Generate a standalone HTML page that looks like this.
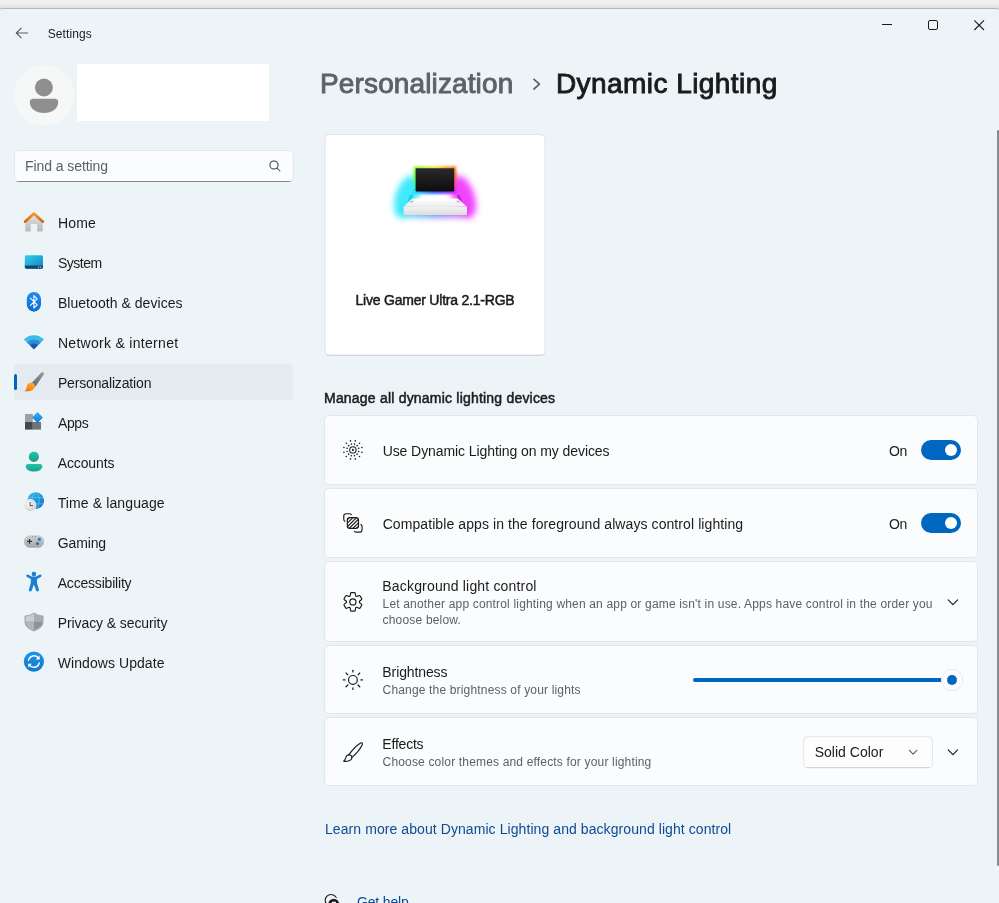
<!DOCTYPE html>
<html><head><meta charset="utf-8">
<style>
html,body{margin:0;padding:0;}
body{width:999px;height:903px;overflow:hidden;position:relative;background:linear-gradient(to bottom,#f1f1f0 0px,#eeeeee 4px,#e4e4e4 7px,#dadada 8.5px,#ecf4f8 9px);font-family:"Liberation Sans",sans-serif;color:#1b1b1b;}
#win{position:absolute;left:-4px;top:8px;width:1007px;height:895px;background:#ecf4f8;border-top:1px solid #b4b7ba;border-radius:7px 7px 0 0;box-sizing:border-box;}
.t{position:absolute;white-space:nowrap;line-height:1;}
.abs{position:absolute;}
svg{position:absolute;overflow:visible;}
.row{position:absolute;left:325px;width:652px;background:#fafcfd;border:1px solid #e2e7eb;border-radius:4px;box-sizing:border-box;}
.tog{position:absolute;left:921px;width:40px;height:20px;border-radius:10px;background:#0067c0;}
.tog i{position:absolute;left:24px;top:4px;width:12px;height:12px;border-radius:50%;background:#fff;}
</style></head><body>
<div id="win"></div>

<!-- avatar -->
<div class="abs" style="left:77px;top:64px;width:192px;height:57px;background:#fff;"></div>

<!-- search -->
<svg width="999" height="903" viewBox="0 0 999 903" style="left:0;top:0;"><defs><clipPath id="cpS"><rect x="10" y="180.9" width="290" height="3"/></clipPath></defs><rect x="14.5" y="150.5" width="278.7" height="31" rx="4" fill="#fafcfd" stroke="#e3e7eb"/><rect x="14.5" y="150.5" width="278.7" height="31" rx="4" fill="none" stroke="#84888d" clip-path="url(#cpS)"/></svg>

<!-- nav selection -->
<div class="abs" style="left:14px;top:364px;width:279px;height:36px;border-radius:4px;background:#e3eaf0;"></div>
<div class="abs" style="left:14px;top:374px;width:3px;height:16px;border-radius:2px;background:#0067c0;"></div>

<!-- device card -->
<svg width="999" height="903" viewBox="0 0 999 903" style="left:0;top:0;"><defs><clipPath id="cpC"><rect x="320" y="354.5" width="230" height="3"/></clipPath></defs><rect x="325" y="134.6" width="220" height="220.6" rx="4" fill="#ffffff" stroke="#dfe3e7"/><rect x="325" y="134.6" width="220" height="220.6" rx="4" fill="none" stroke="#c9cdd2" clip-path="url(#cpC)"/></svg>

<!-- rows -->
<svg width="999" height="903" viewBox="0 0 999 903" style="left:0;top:0;"><rect x="324.5" y="415.5" width="653" height="69.0" rx="4" fill="#fafcfd" stroke="#e1e6ea" stroke-width="1"/><rect x="324.5" y="488.5" width="653" height="69.0" rx="4" fill="#fafcfd" stroke="#e1e6ea" stroke-width="1"/><rect x="324.5" y="561.5" width="653" height="80.0" rx="4" fill="#fafcfd" stroke="#e1e6ea" stroke-width="1"/><rect x="324.5" y="645.5" width="653" height="68.0" rx="4" fill="#fafcfd" stroke="#e1e6ea" stroke-width="1"/><rect x="324.5" y="717.5" width="653" height="68.0" rx="4" fill="#fafcfd" stroke="#e1e6ea" stroke-width="1"/></svg>

<!-- toggles -->
<div class="tog" style="top:440px;"><i></i></div>
<div class="tog" style="top:513px;"><i></i></div>

<!-- slider -->
<div class="abs" style="left:693px;top:678px;width:253px;height:4px;border-radius:2px;background:#0067c0;"></div>
<div class="abs" style="left:942px;top:670px;width:20px;height:20px;border-radius:50%;background:#fff;box-shadow:0 0 0 1px #eaedf0;"></div>
<div class="abs" style="left:946.7px;top:674.7px;width:10.6px;height:10.6px;border-radius:50%;background:#0067c0;"></div>

<!-- dropdown -->
<svg width="999" height="903" viewBox="0 0 999 903" style="left:0;top:0;"><rect x="803.7" y="736.7" width="128.7" height="31.1" rx="3.5" fill="#fdfdfe" stroke="#e3e7ea"/><path d="M806.5 767.6H929.5" stroke="#cdd2d6" stroke-width="1"/></svg>

<div id="txt" style="position:absolute;left:0;top:0;width:999px;height:903px;will-change:transform;">
<span class="t" id="tset" style="left:47.72px;top:27.64px;font-size:12px;letter-spacing:0.099px;color:#1b1b1b;">Settings</span>
<span class="t" id="tfind" style="left:25.06px;top:158.95px;font-size:14px;letter-spacing:-0.076px;color:#5d6166;">Find a setting</span>
<span class="t" id="n1" style="left:57.90px;top:216.45px;font-size:14px;letter-spacing:0.197px;color:#1b1b1b;">Home</span>
<span class="t" id="n2" style="left:57.90px;top:256.45px;font-size:14px;letter-spacing:-0.498px;color:#1b1b1b;">System</span>
<span class="t" id="n3" style="left:57.90px;top:296.45px;font-size:14px;letter-spacing:0.051px;color:#1b1b1b;">Bluetooth &amp; devices</span>
<span class="t" id="n4" style="left:57.90px;top:336.45px;font-size:14px;letter-spacing:0.297px;color:#1b1b1b;">Network &amp; internet</span>
<span class="t" id="n5" style="left:57.90px;top:376.45px;font-size:14px;letter-spacing:-0.156px;color:#1b1b1b;">Personalization</span>
<span class="t" id="n6" style="left:57.90px;top:416.45px;font-size:14px;letter-spacing:-0.334px;color:#1b1b1b;">Apps</span>
<span class="t" id="n7" style="left:57.70px;top:456.45px;font-size:14px;letter-spacing:-0.112px;color:#1b1b1b;">Accounts</span>
<span class="t" id="n8" style="left:57.70px;top:496.45px;font-size:14px;letter-spacing:0.115px;color:#1b1b1b;">Time &amp; language</span>
<span class="t" id="n9" style="left:57.70px;top:536.45px;font-size:14px;letter-spacing:-0.110px;color:#1b1b1b;">Gaming</span>
<span class="t" id="n10" style="left:57.70px;top:576.45px;font-size:14px;letter-spacing:-0.192px;color:#1b1b1b;">Accessibility</span>
<span class="t" id="n11" style="left:57.70px;top:616.45px;font-size:14px;letter-spacing:-0.089px;color:#1b1b1b;">Privacy &amp; security</span>
<span class="t" id="n12" style="left:57.70px;top:656.45px;font-size:14px;letter-spacing:0.074px;color:#1b1b1b;">Windows Update</span>
<span class="t" id="h1" style="left:320.07px;top:69.89px;font-size:28px;letter-spacing:0.123px;color:#5d6166;-webkit-text-stroke:0.9px #5d6166;">Personalization</span>
<span class="t" id="h2" style="left:555.95px;top:69.89px;font-size:28px;letter-spacing:0.439px;color:#1b1b1b;-webkit-text-stroke:0.9px #1b1b1b;">Dynamic Lighting</span>
<span class="t" id="dev" style="left:355.52px;top:293.15px;font-size:14px;letter-spacing:-0.218px;color:#1b1b1b;-webkit-text-stroke:0.5px #1b1b1b;">Live Gamer Ultra 2.1-RGB</span>
<span class="t" id="man" style="left:324.02px;top:391.25px;font-size:14px;letter-spacing:0.205px;color:#1b1b1b;-webkit-text-stroke:0.5px #1b1b1b;">Manage all dynamic lighting devices</span>
<span class="t" id="r1" style="left:382.65px;top:443.85px;font-size:14px;letter-spacing:-0.080px;color:#1b1b1b;">Use Dynamic Lighting on my devices</span>
<span class="t" id="r2" style="left:382.65px;top:516.85px;font-size:14px;letter-spacing:0.086px;color:#1b1b1b;">Compatible apps in the foreground always control lighting</span>
<span class="t" id="r3" style="left:382.35px;top:579.15px;font-size:14px;letter-spacing:0.171px;color:#1b1b1b;">Background light control</span>
<span class="t" id="r3a" style="left:382.57px;top:598.34px;font-size:12px;letter-spacing:0.173px;color:#5d6166;">Let another app control lighting when an app or game isn't in use. Apps have control in the order you</span>
<span class="t" id="r3b" style="left:382.57px;top:614.24px;font-size:12px;letter-spacing:0.184px;color:#5d6166;">choose below.</span>
<span class="t" id="r4" style="left:382.35px;top:665.45px;font-size:14px;letter-spacing:-0.109px;color:#1b1b1b;">Brightness</span>
<span class="t" id="r4a" style="left:382.57px;top:684.04px;font-size:12px;letter-spacing:0.166px;color:#5d6166;">Change the brightness of your lights</span>
<span class="t" id="r5" style="left:382.35px;top:737.05px;font-size:14px;letter-spacing:-0.217px;color:#1b1b1b;">Effects</span>
<span class="t" id="r5a" style="left:382.57px;top:756.04px;font-size:12px;letter-spacing:0.169px;color:#5d6166;">Choose color themes and effects for your lighting</span>
<span class="t" id="on1" style="left:888.98px;top:443.85px;font-size:14px;letter-spacing:-0.311px;color:#1b1b1b;">On</span>
<span class="t" id="on2" style="left:888.98px;top:516.85px;font-size:14px;letter-spacing:-0.311px;color:#1b1b1b;">On</span>
<span class="t" id="solid" style="left:814.66px;top:745.15px;font-size:14px;letter-spacing:0.018px;color:#1b1b1b;">Solid Color</span>
<span class="t" id="learn" style="left:325.00px;top:821.95px;font-size:14px;letter-spacing:0.076px;color:#0f4a94;">Learn more about Dynamic Lighting and background light control</span>
<span class="t" id="help" style="left:357.05px;top:895.15px;font-size:14px;letter-spacing:-0.181px;color:#0f4a94;">Get help</span>
</div>
<svg width="999" height="903" viewBox="0 0 999 903" style="left:0;top:0;" fill="none">
<defs>
<linearGradient id="gHomeRoof" x1="0" y1="0" x2="0" y2="1"><stop offset="0" stop-color="#f59a23"/><stop offset="1" stop-color="#cf6410"/></linearGradient>
<linearGradient id="gHomeBody" x1="0" y1="0" x2="0" y2="1"><stop offset="0" stop-color="#e4e4e4"/><stop offset="1" stop-color="#b9b9b9"/></linearGradient>
<linearGradient id="gSys" x1="0" y1="0" x2="1" y2="1"><stop offset="0" stop-color="#2fd0ea"/><stop offset="1" stop-color="#1880c4"/></linearGradient>
<linearGradient id="gBt" x1="0" y1="0" x2="0" y2="1"><stop offset="0" stop-color="#1b8cf0"/><stop offset="1" stop-color="#0b6fd0"/></linearGradient>
<linearGradient id="gHandle" x1="1" y1="0" x2="0" y2="1"><stop offset="0" stop-color="#9a9da0"/><stop offset="1" stop-color="#5e6266"/></linearGradient>
<linearGradient id="gTip" x1="0.7" y1="0" x2="0.2" y2="1"><stop offset="0" stop-color="#ffb02e"/><stop offset="1" stop-color="#ee6f0e"/></linearGradient>
<linearGradient id="gDia" x1="0" y1="0" x2="0" y2="1"><stop offset="0" stop-color="#35b0f4"/><stop offset="1" stop-color="#1478d4"/></linearGradient>
<linearGradient id="gAcc" x1="0" y1="0" x2="0" y2="1"><stop offset="0" stop-color="#22c4a8"/><stop offset="1" stop-color="#15a08c"/></linearGradient>
<linearGradient id="gGlobe" x1="0" y1="0" x2="1" y2="1"><stop offset="0" stop-color="#2fc4e6"/><stop offset="1" stop-color="#1468c8"/></linearGradient>
<radialGradient id="gClock" cx="0.4" cy="0.35" r="0.7"><stop offset="0" stop-color="#fafafa"/><stop offset="1" stop-color="#cfcfcf"/></radialGradient>
<linearGradient id="gPad" x1="0" y1="0" x2="0" y2="1"><stop offset="0" stop-color="#cdcfd0"/><stop offset="1" stop-color="#a4a6a8"/></linearGradient>
<linearGradient id="gUpd" x1="0" y1="0" x2="0" y2="1"><stop offset="0" stop-color="#1c96e8"/><stop offset="1" stop-color="#0f78cc"/></linearGradient>
<radialGradient id="gCy" cx="0.5" cy="0.5" r="0.5"><stop offset="0" stop-color="#00f0ff" stop-opacity="1"/><stop offset="0.45" stop-color="#20e8ff" stop-opacity="0.85"/><stop offset="1" stop-color="#60e8ff" stop-opacity="0"/></radialGradient>
<radialGradient id="gMg" cx="0.5" cy="0.5" r="0.5"><stop offset="0" stop-color="#f000ff" stop-opacity="1"/><stop offset="0.45" stop-color="#f020ff" stop-opacity="0.85"/><stop offset="1" stop-color="#f860ff" stop-opacity="0"/></radialGradient>
<linearGradient id="gRain" x1="0" y1="0" x2="1" y2="0"><stop offset="0" stop-color="#7dff30"/><stop offset="0.5" stop-color="#ffe030"/><stop offset="1" stop-color="#ff6a20"/></linearGradient>
<linearGradient id="gRainB" x1="0" y1="0" x2="1" y2="0"><stop offset="0" stop-color="#20d8ff"/><stop offset="0.5" stop-color="#3060ff"/><stop offset="1" stop-color="#e020ff"/></linearGradient>
<linearGradient id="gRainL" x1="0" y1="0" x2="0" y2="1"><stop offset="0" stop-color="#7dff30"/><stop offset="1" stop-color="#20e0ff"/></linearGradient>
<linearGradient id="gRainR" x1="0" y1="0" x2="0" y2="1"><stop offset="0" stop-color="#ff6a20"/><stop offset="1" stop-color="#f020ff"/></linearGradient>
<linearGradient id="gScreen" x1="0" y1="0" x2="0" y2="1"><stop offset="0" stop-color="#2a2a2a"/><stop offset="1" stop-color="#0c0c0c"/></linearGradient>
<linearGradient id="gBaseTop" x1="0" y1="0" x2="0" y2="1"><stop offset="0" stop-color="#ffffff"/><stop offset="1" stop-color="#ececec"/></linearGradient>
<linearGradient id="gBaseFront" x1="0" y1="0" x2="0" y2="1"><stop offset="0" stop-color="#f2f2f2"/><stop offset="1" stop-color="#dcdcdc"/></linearGradient>
<filter id="blur2" x="-50%" y="-50%" width="200%" height="200%"><feGaussianBlur stdDeviation="1.2"/></filter>
<filter id="blur4" x="-50%" y="-50%" width="200%" height="200%"><feGaussianBlur stdDeviation="3"/></filter>
<clipPath id="clipGlobe"><circle cx="35.7" cy="500.6" r="8.4"/></clipPath>
<clipPath id="clipHatch"><rect x="347.3" y="517.6" width="11.2" height="10.8" rx="2.6"/></clipPath>
</defs>
<g stroke="#5a5f64" stroke-width="1.1" stroke-linecap="round" stroke-linejoin="round"><path d="M16.3 33H27.6M21.2 28.1L16.3 33L21.2 37.9"/></g>
<g stroke="#1b1b1b" stroke-width="1"><path d="M882 24.5H892"/><rect x="928.5" y="20.5" width="9" height="9" rx="1.5"/><path d="M974.3 20.3L984 30M984 20.3L974.3 30" stroke-width="1.1"/></g>
<circle cx="44.1" cy="95.3" r="30.2" fill="#f6f7f7"/>
<circle cx="43.9" cy="87.5" r="9" fill="#8f8f8f"/>
<path d="M33.3 98.8H54.7A3.5 3.5 0 0 1 58.2 102.3C58.2 108.5 52 113.1 44 113.1C36 113.1 29.8 108.5 29.8 102.3A3.5 3.5 0 0 1 33.3 98.8Z" fill="#8f8f8f"/>
<g stroke="#3a3d40" stroke-width="1.05" stroke-linecap="round"><circle cx="274" cy="165" r="4.1"/><path d="M277 168L280 171"/></g>
<path d="M25.2 220.5L33.9 213.6L42.8 220.5V230A1.5 1.5 0 0 1 41.3 231.5H37.2V224H30.8V231.5H26.7A1.5 1.5 0 0 1 25.2 230Z" fill="url(#gHomeBody)"/>
<path d="M25 221.7L33.9 213.5L42.9 221.7" stroke="url(#gHomeRoof)" stroke-width="2.6" stroke-linecap="round" stroke-linejoin="round"/>
<rect x="24.8" y="255.3" width="18.2" height="13.4" rx="1.6" fill="url(#gSys)"/>
<path d="M24.8 265.6H43V267.1A1.6 1.6 0 0 1 41.4 268.7H26.4A1.6 1.6 0 0 1 24.8 267.1Z" fill="#0d4878"/>
<circle cx="38.6" cy="267.2" r="0.6" fill="#cfe8f8"/><circle cx="40.6" cy="267.2" r="0.6" fill="#cfe8f8"/>
<rect x="26.8" y="291.9" width="14.2" height="19.8" rx="7.1" fill="url(#gBt)"/>
<path d="M30.4 298.2L37.2 304.8L33.9 308V295.6L37.2 298.8L30.4 305.4" stroke="#fff" stroke-width="1.1" stroke-linejoin="round" stroke-linecap="round"/>
<path d="M33.9 349.2L23.83 339.47A14.0 14.0 0 0 1 43.97 339.47Z" fill="#3cbcea"/>
<path d="M33.9 349.2L26.99 342.53A9.6 9.6 0 0 1 40.81 342.53Z" fill="#2b8ed2"/>
<path d="M33.9 349.2L29.87 345.31A5.6 5.6 0 0 1 37.93 345.31Z" fill="#1b58a6"/>
<path d="M41.4 372.5C42.8 371.6 44.6 373 43.8 374.6L35.4 386.8L31.2 383.6Z" fill="url(#gHandle)"/>
<path d="M30.6 382.6C32.6 382 35.4 384.4 34.9 387C34.2 390.2 29.5 391.8 24.2 391.2C26.8 390 26.4 388 27 385.8C27.5 384 28.8 383 30.6 382.6Z" fill="url(#gTip)"/>
<rect x="25" y="414" width="7.8" height="8" fill="#9c9fa3"/><rect x="25" y="422" width="7.8" height="7.6" fill="#44484d"/><rect x="32.8" y="422" width="8.2" height="7.6" fill="#6f7377"/>
<path d="M37.5 412L43 417.5L37.5 423L32 417.5Z" fill="url(#gDia)"/>
<circle cx="33.9" cy="456.8" r="5.1" fill="url(#gAcc)"/>
<path d="M28 464H40.1A2.2 2.2 0 0 1 42.3 466.2C42.3 469.4 38.6 471.6 34 471.6C29.4 471.6 25.8 469.4 25.8 466.2A2.2 2.2 0 0 1 28 464Z" fill="url(#gAcc)"/>
<circle cx="35.7" cy="500.6" r="8.4" fill="url(#gGlobe)"/>
<g clip-path="url(#clipGlobe)" stroke="#6fd0f0" stroke-width="0.8" opacity="0.75"><ellipse cx="35.7" cy="500.6" rx="3.6" ry="8.4"/><path d="M27 497.6H45M27 503.8H45"/></g>
<circle cx="30.1" cy="505.4" r="6.3" fill="#eef5f9"/><circle cx="30.1" cy="505.4" r="5.8" fill="url(#gClock)"/>
<path d="M30.1 502.4V505.6H32.6" stroke="#3a3a3a" stroke-width="0.9" stroke-linecap="round" stroke-linejoin="round"/>
<rect x="23.9" y="535.2" width="20.2" height="12.6" rx="6.3" fill="url(#gPad)"/>
<path d="M27.1 541.4H31.9M29.5 539V543.8" stroke="#2e2e2e" stroke-width="1.1"/>
<circle cx="39.4" cy="539.2" r="1.5" fill="#1a74cc"/><circle cx="37.5" cy="543.5" r="1.6" fill="#1a74cc"/>
<circle cx="32.6" cy="536.4" r="0.45" fill="#444"/><circle cx="35.4" cy="536.4" r="0.45" fill="#444"/>
<circle cx="33.9" cy="574" r="2.3" fill="#1a80d6"/>
<path d="M26.4 575.2C26.8 574.4 27.6 574.3 28.3 574.7L31.6 576.6H36.2L39.5 574.7C40.2 574.3 41 574.4 41.4 575.2C41.8 576 41.4 576.7 40.7 577.1L37 579V583L38.9 589.6C39.1 590.5 38.7 591.2 37.9 591.4C37.1 591.6 36.4 591.2 36.1 590.4L33.9 584.6L31.7 590.4C31.4 591.2 30.7 591.6 29.9 591.4C29.1 591.2 28.7 590.5 28.9 589.6L30.8 583V579L27.1 577.1C26.4 576.7 26 576 26.4 575.2Z" fill="#1a80d6"/>
<path d="M34 613C36.8 615 39.8 615.8 43 616V621.5C43 626 39.5 629.2 34 630.8C28.5 629.2 25 626 25 621.5V616C28.2 615.8 31.2 615 34 613Z" fill="#b4b7ba" stroke="#8e9194" stroke-width="0.8"/>
<path d="M34 613.6C31.4 615.4 28.6 616.2 25.6 616.5V621.6H34Z" fill="#cbced0"/>
<path d="M34 621.6H42.4C42.3 625.6 39.1 628.6 34 630.1Z" fill="#8f9295"/>
<path d="M34 613.6C36.6 615.4 39.4 616.2 42.4 616.5V621.6H34Z" fill="#a9acaf"/>
<path d="M34 621.6H25.6C25.7 625.6 28.9 628.6 34 630.1Z" fill="#b2b5b8"/>
<circle cx="33.9" cy="661.6" r="10.1" fill="url(#gUpd)"/>
<g stroke="#fff" stroke-width="1.5" stroke-linecap="round" stroke-linejoin="round"><path d="M28.6 660.2A5.5 5.5 0 0 1 38.6 658.4"/><path d="M39.2 663A5.5 5.5 0 0 1 29.2 664.8"/></g>
<path d="M39.6 655.6V659.4H35.8Z" fill="#fff"/><path d="M28.2 667.6V663.8H32Z" fill="#fff"/>
<path d="M534 79.4L539.4 84.2L534 89" stroke="#5d6166" stroke-width="1.7" stroke-linecap="round" stroke-linejoin="round"/>
<g filter="url(#blur4)"><ellipse cx="406.5" cy="197" rx="11" ry="22" transform="rotate(18 406.5 197)" fill="#28e8fc" opacity="0.9"/><ellipse cx="463.5" cy="197" rx="11" ry="22" transform="rotate(-18 463.5 197)" fill="#f030fc" opacity="0.9"/><rect x="404" y="208" width="62" height="9" fill="url(#gRainB)" opacity="0.8"/></g>
<g filter="url(#blur2)"><rect x="413.6" y="166.2" width="42.6" height="27" rx="1.5" fill="url(#gRain)"/><rect x="413.4" y="172" width="5" height="22" fill="url(#gRainL)"/><rect x="451.6" y="172" width="5" height="22" fill="url(#gRainR)"/><rect x="414" y="189" width="42" height="5" fill="url(#gRainB)"/></g>
<path d="M409.8 195.2L413.2 194.6L412.6 198.6L407.6 201.4Z" fill="#14cdea" opacity="0.85"/><path d="M460.2 195.2L456.8 194.6L457.4 198.6L462.4 201.4Z" fill="#c41cf0" opacity="0.85"/>
<rect x="415.6" y="168.2" width="38.6" height="23.2" rx="0.8" fill="url(#gScreen)"/>
<path d="M412.4 198.4H457.4L467 206.8H403.6Z" fill="url(#gBaseTop)"/>
<path d="M403.6 206.8H467V214.2A0.8 0.8 0 0 1 466.2 215H404.4A0.8 0.8 0 0 1 403.6 214.2Z" fill="url(#gBaseFront)"/>
<path d="M409 202.4L411.6 200.8H414L412.4 202.4Z" fill="#9a9a9a" opacity="0.7"/><path d="M461 202.4L458.4 200.8H456L457.6 202.4Z" fill="#9a9a9a" opacity="0.7"/>
<circle cx="352.9" cy="449.9" r="1.05" fill="#1b1b1b"/><circle cx="352.9" cy="449.9" r="3.2" stroke="#1b1b1b" stroke-width="1.05"/>
<circle cx="354.45" cy="444.10" r="0.8" fill="#1b1b1b"/>
<circle cx="355.31" cy="440.92" r="0.8" fill="#1b1b1b"/>
<circle cx="357.14" cy="445.66" r="0.8" fill="#1b1b1b"/>
<circle cx="359.48" cy="443.32" r="0.8" fill="#1b1b1b"/>
<circle cx="358.70" cy="448.35" r="0.8" fill="#1b1b1b"/>
<circle cx="361.88" cy="447.49" r="0.8" fill="#1b1b1b"/>
<circle cx="358.70" cy="451.45" r="0.8" fill="#1b1b1b"/>
<circle cx="361.88" cy="452.31" r="0.8" fill="#1b1b1b"/>
<circle cx="357.14" cy="454.14" r="0.8" fill="#1b1b1b"/>
<circle cx="359.48" cy="456.48" r="0.8" fill="#1b1b1b"/>
<circle cx="354.45" cy="455.70" r="0.8" fill="#1b1b1b"/>
<circle cx="355.31" cy="458.88" r="0.8" fill="#1b1b1b"/>
<circle cx="351.35" cy="455.70" r="0.8" fill="#1b1b1b"/>
<circle cx="350.49" cy="458.88" r="0.8" fill="#1b1b1b"/>
<circle cx="348.66" cy="454.14" r="0.8" fill="#1b1b1b"/>
<circle cx="346.32" cy="456.48" r="0.8" fill="#1b1b1b"/>
<circle cx="347.10" cy="451.45" r="0.8" fill="#1b1b1b"/>
<circle cx="343.92" cy="452.31" r="0.8" fill="#1b1b1b"/>
<circle cx="347.10" cy="448.35" r="0.8" fill="#1b1b1b"/>
<circle cx="343.92" cy="447.49" r="0.8" fill="#1b1b1b"/>
<circle cx="348.66" cy="445.66" r="0.8" fill="#1b1b1b"/>
<circle cx="346.32" cy="443.32" r="0.8" fill="#1b1b1b"/>
<circle cx="351.35" cy="444.10" r="0.8" fill="#1b1b1b"/>
<circle cx="350.49" cy="440.92" r="0.8" fill="#1b1b1b"/>
<g stroke="#1b1b1b" stroke-width="1.15" stroke-linecap="round">
<path d="M351.3 514.6A2.3 2.3 0 0 0 349.45 513.75H346.05A2.3 2.3 0 0 0 343.75 516.05V519.3A2.3 2.3 0 0 0 344.9 521.3"/>
<path d="M354.5 531.3A2.3 2.3 0 0 0 356.35 532.15H359.75A2.3 2.3 0 0 0 362.05 529.85V526.6A2.3 2.3 0 0 0 360.9 524.6"/>
<rect x="347.3" y="517.6" width="11.2" height="10.8" rx="2.6"/>
<g clip-path="url(#clipHatch)" stroke-width="1.15"><path d="M333.00 534L355.00 512M336.55 534L358.55 512M340.10 534L362.10 512M343.65 534L365.65 512M347.20 534L369.20 512M350.75 534L372.75 512"/></g>
</g>
<path d="M350.15 595.95L350.55 593.40Q350.60 592.65 351.35 592.65L354.45 592.65Q355.20 592.65 355.25 593.40L355.65 595.95A6.55 6.55 0 0 1 356.68 596.54L359.09 595.61Q359.76 595.28 360.14 595.93L361.69 598.62Q362.06 599.27 361.44 599.69L359.43 601.31A6.55 6.55 0 0 1 359.43 602.49L361.44 604.11Q362.06 604.53 361.69 605.18L360.14 607.87Q359.76 608.52 359.09 608.19L356.68 607.26A6.55 6.55 0 0 1 355.65 607.85L355.25 610.40Q355.20 611.15 354.45 611.15L351.35 611.15Q350.60 611.15 350.55 610.40L350.15 607.85A6.55 6.55 0 0 1 349.12 607.26L346.71 608.19Q346.04 608.52 345.66 607.87L344.11 605.18Q343.74 604.53 344.36 604.11L346.37 602.49A6.55 6.55 0 0 1 346.37 601.31L344.36 599.69Q343.74 599.27 344.11 598.62L345.66 595.93Q346.04 595.28 346.71 595.61L349.12 596.54A6.55 6.55 0 0 1 350.15 595.95Z" stroke="#1b1b1b" stroke-width="1.15" stroke-linejoin="round"/>
<circle cx="352.9" cy="601.9" r="3.1" stroke="#1b1b1b" stroke-width="1.15"/>
<path d="M948.1999999999999 599.8000000000001L952.9 604.6L957.6 599.8000000000001" stroke="#1b1b1b" stroke-width="1.15" stroke-linecap="round" stroke-linejoin="round"/>
<path d="M948.1999999999999 749.8000000000001L952.9 754.6L957.6 749.8000000000001" stroke="#1b1b1b" stroke-width="1.15" stroke-linecap="round" stroke-linejoin="round"/>
<path d="M909.4 750.3000000000001L913.1 754.1L916.8000000000001 750.3000000000001" stroke="#5c6064" stroke-width="1.15" stroke-linecap="round" stroke-linejoin="round"/>
<circle cx="352.9" cy="679.9" r="4.4" stroke="#1b1b1b" stroke-width="1.15"/>
<path d="M352.90 671.90L352.90 670.30" stroke="#1b1b1b" stroke-width="1.2" stroke-linecap="round"/>
<path d="M357.99 674.81L359.76 673.04" stroke="#1b1b1b" stroke-width="1.2" stroke-linecap="round"/>
<path d="M360.90 679.90L362.50 679.90" stroke="#1b1b1b" stroke-width="1.2" stroke-linecap="round"/>
<path d="M357.99 684.99L359.76 686.76" stroke="#1b1b1b" stroke-width="1.2" stroke-linecap="round"/>
<path d="M352.90 687.90L352.90 689.50" stroke="#1b1b1b" stroke-width="1.2" stroke-linecap="round"/>
<path d="M347.81 684.99L346.04 686.76" stroke="#1b1b1b" stroke-width="1.2" stroke-linecap="round"/>
<path d="M344.90 679.90L343.30 679.90" stroke="#1b1b1b" stroke-width="1.2" stroke-linecap="round"/>
<path d="M347.81 674.81L346.04 673.04" stroke="#1b1b1b" stroke-width="1.2" stroke-linecap="round"/>
<path d="M348.8 754.8C352.6 749.6 357 745.2 360.6 743C361.8 742.3 362.8 743.2 362.3 744.5C360.6 748.6 356.6 753.4 351.8 757.4" stroke="#1b1b1b" stroke-width="1.15" stroke-linecap="round" stroke-linejoin="round"/>
<path d="M348.6 754.9C350.6 754.6 352.2 756.2 351.9 758.2C351.5 760.6 347.8 761.8 343.6 761.2C345.6 760 345.4 758.6 345.9 757.2C346.3 755.9 347.3 755.1 348.6 754.9Z" stroke="#1b1b1b" stroke-width="1.15" stroke-linejoin="round"/>
<circle cx="331" cy="900.3" r="5.8" stroke="#1b1b1b" stroke-width="1.1"/>
<circle cx="333.7" cy="904.1" r="6.1" fill="#1b1b1b" stroke="#ecf4f8" stroke-width="1.4"/>
<path d="M331.9 902.4H335.3V903.2" stroke="#fff" stroke-width="1.1"/>
</svg>

<!-- scrollbar -->
<div class="abs" style="left:997px;top:130px;width:2px;height:736px;background:#878c93;border-radius:1px;"></div>
</body></html>
